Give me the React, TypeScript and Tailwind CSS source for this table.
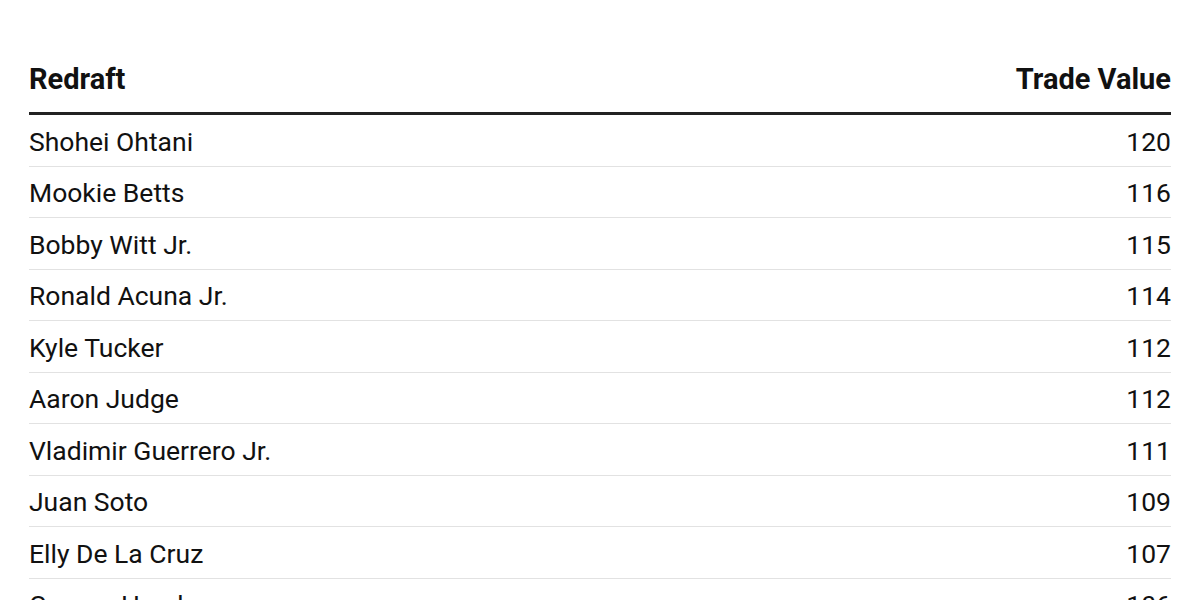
import React from "react";

const ROWS: [string, number][] = [
  ["Shohei Ohtani", 120],
  ["Mookie Betts", 116],
  ["Bobby Witt Jr.", 115],
  ["Ronald Acuna Jr.", 114],
  ["Kyle Tucker", 112],
  ["Aaron Judge", 112],
  ["Vladimir Guerrero Jr.", 111],
  ["Juan Soto", 109],
  ["Elly De La Cruz", 107],
  ["Gunnar Henderson", 106],
];

export default function App() {
  return (
    <div className="w-[1200px] h-[600px] overflow-hidden bg-white text-[#111] px-[29px] pt-[60px]" style={{ fontFamily: "Roboto, 'Liberation Sans', sans-serif" }}>
      <div className="flex justify-between items-center h-[40px] mb-[12px] text-[29px] font-bold">
        <span>Redraft</span>
        <span>Trade Value</span>
      </div>
      <div className="border-t-[3px] border-[#222]">
        {ROWS.map(([name, val]) => (
          <div key={name} className="flex justify-between items-center h-[51.5px] pt-[3px] border-b border-[#e2e2e2] text-[26.5px]">
            <span>{name}</span>
            <span>{val}</span>
          </div>
        ))}
      </div>
    </div>
  );
}
